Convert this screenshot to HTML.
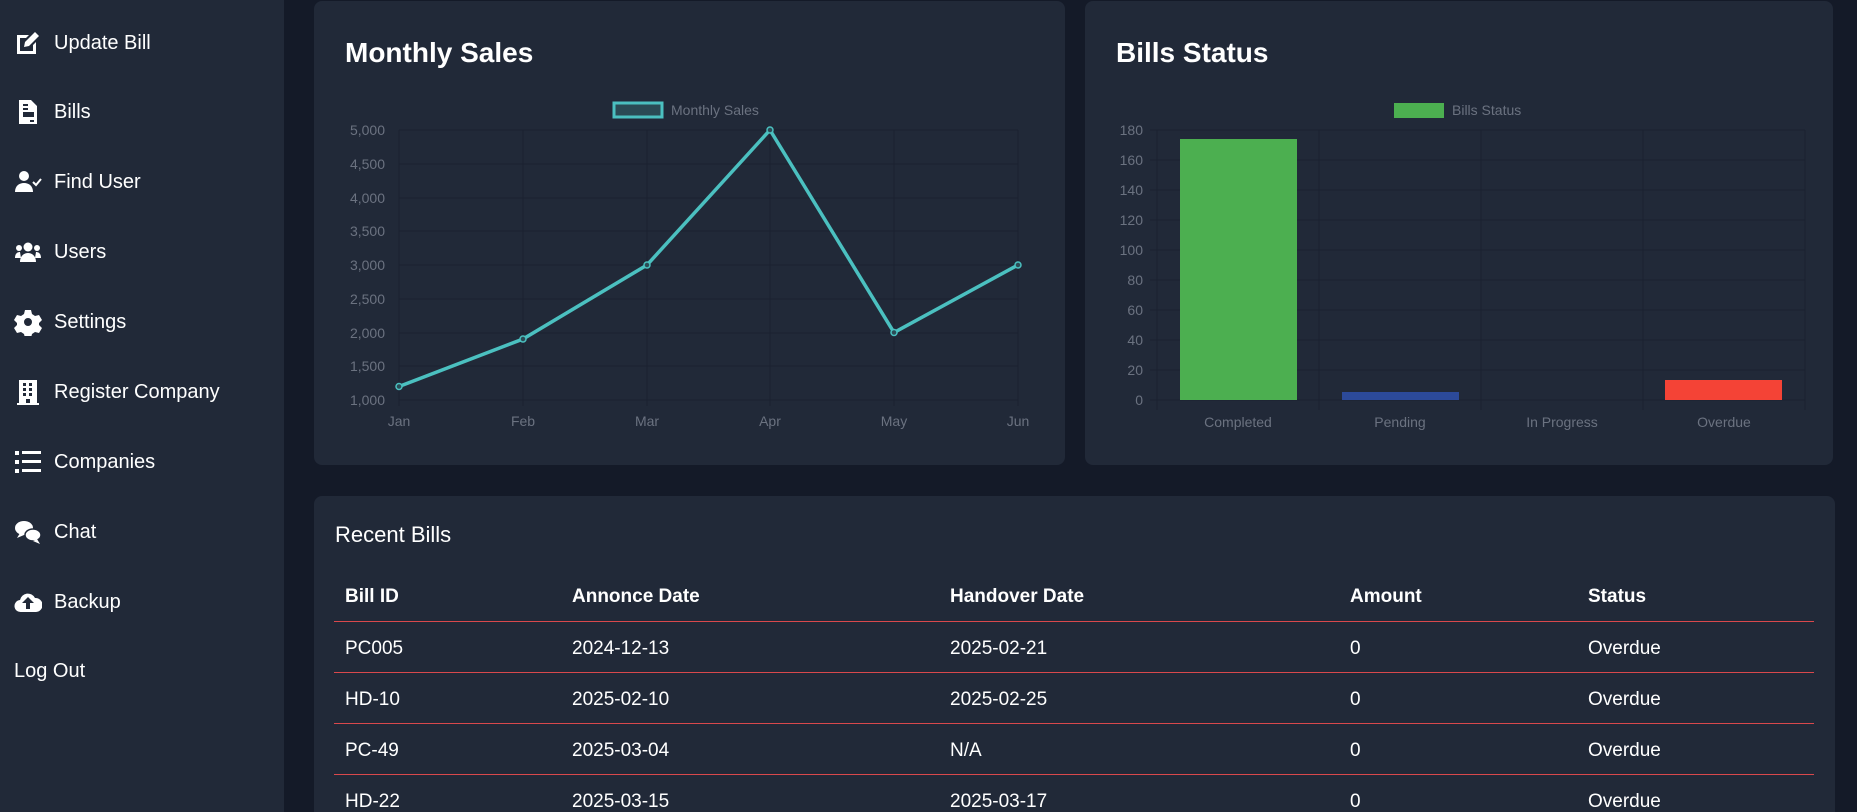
<!DOCTYPE html>
<html style="overflow:hidden;height:812px"><head><meta charset="utf-8"><style>
*{margin:0;padding:0;box-sizing:border-box}
body{width:1857px;height:812px;overflow:hidden;background:#141a28;font-family:"Liberation Sans",sans-serif;color:#fff;position:relative}
.sb{position:absolute;left:0;top:0;width:284px;height:812px;background:#212938}
.it{position:absolute;left:14px;height:30px;display:flex;align-items:center;font-size:20px}
.it svg{width:28px;height:28px;margin-right:12px;fill:#fff}
.card{position:absolute;background:#212938;border-radius:8px}
h2{position:absolute;font-size:28px;font-weight:bold}
.row{position:absolute;left:334px;width:1480px;font-size:19px}
.row span{position:absolute;top:0}
.line{position:absolute;left:334px;width:1480px;height:1px;background:#d9484c}
</style></head><body>
<div class="sb">
<div class="it" style="top:28px"><svg viewBox="0 0 28 28"><path d="M3 6h12l-3 3H6v13h13v-6l3-3v12H3z"/><path d="M21 3l4 4-10 10-5 1 1-5z"/></svg>Update Bill</div>
<div class="it" style="top:97px"><svg viewBox="0 0 28 28"><path d="M5 2h12l6 6v18H5z M9 6v2h5V6z M9 10v2h5v-2z M9 14v5h11v-5z M16 22v2h4v-2z" fill-rule="evenodd"/></svg>Bills</div>
<div class="it" style="top:167px"><svg viewBox="0 0 28 28"><circle cx="10" cy="8" r="5"/><path d="M1 24c0-6 4-9 9-9s9 3 9 9z"/><path d="M19 14l3 3 5-6" stroke="#fff" stroke-width="2" fill="none"/></svg>Find User</div>
<div class="it" style="top:237px"><svg viewBox="0 0 28 28"><circle cx="14" cy="9" r="4.5"/><circle cx="5" cy="10" r="3"/><circle cx="23" cy="10" r="3"/><path d="M6 24c0-6 4-9 8-9s8 3 8 9z M1 20c0-4 2-6 5-6l1 6z M27 20c0-4-2-6-5-6l-1 6z"/></svg>Users</div>
<div class="it" style="top:307px"><svg viewBox="0 0 28 28"><path d="M11 2h6l1 4 3 2 4-1 3 5-3 3v2l3 3-3 5-4-1-3 2-1 4h-6l-1-4-3-2-4 1-3-5 3-3v-2l-3-3 3-5 4 1 3-2z M14 10a4 4 0 100 8 4 4 0 000-8z" fill-rule="evenodd"/></svg>Settings</div>
<div class="it" style="top:377px"><svg viewBox="0 0 28 28"><path d="M5 2h18v23h2v2H3v-2h2z M9 5v3h3V5z M15 5v3h3V5z M9 10v3h3v-3z M15 10v3h3v-3z M9 15v3h3v-3z M15 15v3h3v-3z M12 21v4h4v-4z" fill-rule="evenodd"/></svg>Register Company</div>
<div class="it" style="top:447px"><svg viewBox="0 0 28 28"><rect x="1" y="3" width="4" height="4"/><rect x="1" y="12" width="4" height="4"/><rect x="1" y="21" width="4" height="4"/><rect x="8" y="3" width="19" height="3"/><rect x="8" y="12" width="19" height="3"/><rect x="8" y="21" width="19" height="3"/></svg>Companies</div>
<div class="it" style="top:517px"><svg viewBox="0 0 28 28"><ellipse cx="10" cy="10" rx="9" ry="7"/><path d="M3 20l3-5 4 2z"/><ellipse cx="19" cy="17" rx="8" ry="6" stroke="#212938" stroke-width="1.5"/><path d="M26 26l-3-5-4 2z"/></svg>Chat</div>
<div class="it" style="top:587px"><svg viewBox="0 0 28 28"><path d="M7 24a6 6 0 01-1-12 8 8 0 0115-2 7 7 0 011 14z M14 9l-6 6h4v6h4v-6h4z" fill-rule="evenodd"/></svg>Backup</div>
<div class="it" style="top:656px">Log Out</div>
</div>

<div class="card" style="left:314px;top:1px;width:751px;height:464px"></div>
<div class="card" style="left:1085px;top:1px;width:748px;height:464px"></div>
<div class="card" style="left:314px;top:496px;width:1521px;height:316px;border-radius:8px 8px 0 0"></div>
<h2 style="left:345px;top:37px">Monthly Sales</h2>
<h2 style="left:1116px;top:37px">Bills Status</h2>

<svg style="position:absolute;left:0;top:0" width="1857" height="470" font-family="Liberation Sans" font-size="14" fill="#6b7280">
<g stroke="#1a2130" stroke-width="1">
<line x1="399" y1="130" x2="1018" y2="130"/><line x1="399" y1="164" x2="1018" y2="164"/><line x1="399" y1="198" x2="1018" y2="198"/><line x1="399" y1="231" x2="1018" y2="231"/><line x1="399" y1="265" x2="1018" y2="265"/><line x1="399" y1="299" x2="1018" y2="299"/><line x1="399" y1="333" x2="1018" y2="333"/><line x1="399" y1="366" x2="1018" y2="366"/><line x1="399" y1="400" x2="1018" y2="400"/>
<line x1="399" y1="130" x2="399" y2="406"/><line x1="523" y1="130" x2="523" y2="406"/><line x1="647" y1="130" x2="647" y2="406"/><line x1="770" y1="130" x2="770" y2="406"/><line x1="894" y1="130" x2="894" y2="406"/><line x1="1018" y1="130" x2="1018" y2="406"/>
</g>
<g text-anchor="end"><text x="385" y="135">5,000</text><text x="385" y="169">4,500</text><text x="385" y="203">4,000</text><text x="385" y="236">3,500</text><text x="385" y="270">3,000</text><text x="385" y="304">2,500</text><text x="385" y="338">2,000</text><text x="385" y="371">1,500</text><text x="385" y="405">1,000</text></g>
<g text-anchor="middle"><text x="399" y="426">Jan</text><text x="523" y="426">Feb</text><text x="647" y="426">Mar</text><text x="770" y="426">Apr</text><text x="894" y="426">May</text><text x="1018" y="426">Jun</text></g>
<rect x="614" y="103" width="48" height="14" fill="#2b4b55" stroke="#4bc0c0" stroke-width="3"/><text x="671" y="115">Monthly Sales</text>
<polyline points="399,386.5 523,339 647,265 770,130 894,332.5 1018,265" fill="none" stroke="#4bc0c0" stroke-width="3.5"/>
<g fill="#2b4b55" stroke="#4bc0c0" stroke-width="1.5"><circle cx="399" cy="386.5" r="3"/><circle cx="523" cy="339" r="3"/><circle cx="647" cy="265" r="3"/><circle cx="770" cy="130" r="3"/><circle cx="894" cy="332.5" r="3"/><circle cx="1018" cy="265" r="3"/></g>

<g stroke="#1a2130" stroke-width="1">
<line x1="1150" y1="130" x2="1805" y2="130"/><line x1="1150" y1="160" x2="1805" y2="160"/><line x1="1150" y1="190" x2="1805" y2="190"/><line x1="1150" y1="220" x2="1805" y2="220"/><line x1="1150" y1="250" x2="1805" y2="250"/><line x1="1150" y1="280" x2="1805" y2="280"/><line x1="1150" y1="310" x2="1805" y2="310"/><line x1="1150" y1="340" x2="1805" y2="340"/><line x1="1150" y1="370" x2="1805" y2="370"/><line x1="1150" y1="400" x2="1805" y2="400"/>
<line x1="1157" y1="130" x2="1157" y2="410"/><line x1="1319" y1="130" x2="1319" y2="410"/><line x1="1481" y1="130" x2="1481" y2="410"/><line x1="1643" y1="130" x2="1643" y2="410"/><line x1="1805" y1="130" x2="1805" y2="410"/>
</g>
<g text-anchor="end"><text x="1143" y="135">180</text><text x="1143" y="165">160</text><text x="1143" y="195">140</text><text x="1143" y="225">120</text><text x="1143" y="255">100</text><text x="1143" y="285">80</text><text x="1143" y="315">60</text><text x="1143" y="345">40</text><text x="1143" y="375">20</text><text x="1143" y="405">0</text></g>
<g text-anchor="middle"><text x="1238" y="427">Completed</text><text x="1400" y="427">Pending</text><text x="1562" y="427">In Progress</text><text x="1724" y="427">Overdue</text></g>
<rect x="1394" y="103" width="50" height="15" fill="#4caf50"/><text x="1452" y="115">Bills Status</text>
<rect x="1180" y="139" width="117" height="261" fill="#4caf50"/>
<rect x="1342" y="392" width="117" height="8" fill="#2c4a9a"/>
<rect x="1665" y="380" width="117" height="20" fill="#f44336"/>
</svg>

<div style="position:absolute;left:335px;top:522px;font-size:22px">Recent Bills</div>
<div class="row" style="top:586px;font-weight:bold"><span style="left:11px">Bill ID</span><span style="left:238px">Annonce Date</span><span style="left:616px">Handover Date</span><span style="left:1016px">Amount</span><span style="left:1254px">Status</span></div>
<div class="line" style="top:621px"></div>
<div class="row" style="top:638px"><span style="left:11px">PC005</span><span style="left:238px">2024-12-13</span><span style="left:616px">2025-02-21</span><span style="left:1016px">0</span><span style="left:1254px">Overdue</span></div>
<div class="line" style="top:672px"></div>
<div class="row" style="top:689px"><span style="left:11px">HD-10</span><span style="left:238px">2025-02-10</span><span style="left:616px">2025-02-25</span><span style="left:1016px">0</span><span style="left:1254px">Overdue</span></div>
<div class="line" style="top:723px"></div>
<div class="row" style="top:740px"><span style="left:11px">PC-49</span><span style="left:238px">2025-03-04</span><span style="left:616px">N/A</span><span style="left:1016px">0</span><span style="left:1254px">Overdue</span></div>
<div class="line" style="top:774px"></div>
<div class="row" style="top:791px"><span style="left:11px">HD-22</span><span style="left:238px">2025-03-15</span><span style="left:616px">2025-03-17</span><span style="left:1016px">0</span><span style="left:1254px">Overdue</span></div>
</body></html>
